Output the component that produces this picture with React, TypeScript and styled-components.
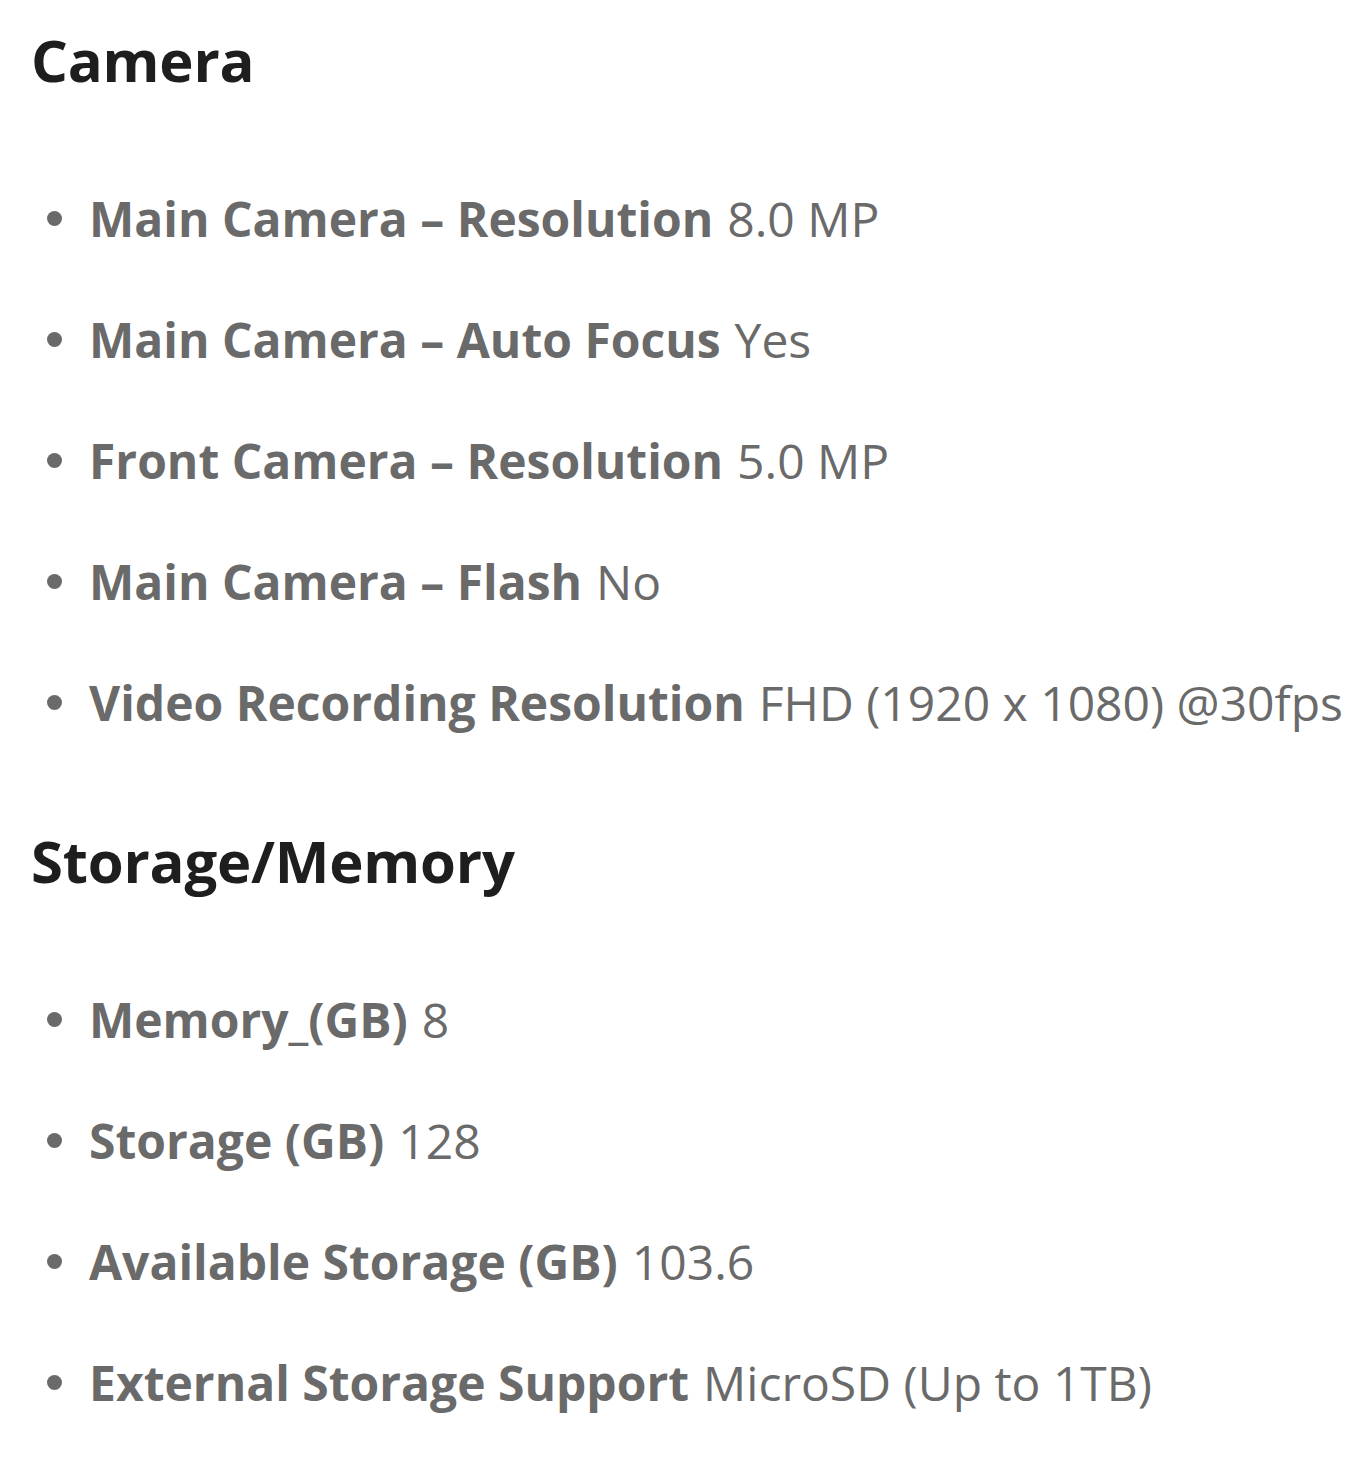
import React from "react";
import styled, { createGlobalStyle } from "styled-components";

const Global = createGlobalStyle`
  html, body { margin: 0; padding: 0; background: #ffffff; }
  body { font-family: "Open Sans", "Noto Sans", sans-serif; }
`;

const Page = styled.main`
  padding: 20px 0 0 31px;
  display: flex;
  flex-direction: column;
  gap: 58px;
`;

const Section = styled.section`
  display: flex;
  flex-direction: column;
  gap: 58px;
`;

const Heading = styled.h2`
  margin: 0;
  height: 80px;
  line-height: 80px;
  font-size: 58px;
  font-weight: 700;
  color: #1e1e1e;
  letter-spacing: -0.2px;
`;

const List = styled.ul`
  margin: 0;
  padding: 0;
  list-style: none;
  display: flex;
  flex-direction: column;
`;

const Item = styled.li`
  height: 121px;
  display: flex;
  align-items: center;
  font-size: 48px;
  color: #6a6a6a;
  white-space: nowrap;
  letter-spacing: 0;
`;

const Bullet = styled.span`
  width: 15px;
  height: 15px;
  border-radius: 50%;
  background: #6a6a6a;
  margin: 0 27px 0 16px;
  flex: none;
`;

const Label = styled.strong`
  font-weight: 700;
  margin-right: 14px;
`;

const Value = styled.span`
  font-weight: 400;
`;

type Spec = { label: string; value: string };

const sections: { title: string; specs: Spec[] }[] = [
  {
    title: "Camera",
    specs: [
      { label: "Main Camera – Resolution", value: "8.0 MP" },
      { label: "Main Camera – Auto Focus", value: "Yes" },
      { label: "Front Camera – Resolution", value: "5.0 MP" },
      { label: "Main Camera – Flash", value: "No" },
      { label: "Video Recording Resolution", value: "FHD (1920 x 1080) @30fps" },
    ],
  },
  {
    title: "Storage/Memory",
    specs: [
      { label: "Memory_(GB)", value: "8" },
      { label: "Storage (GB)", value: "128" },
      { label: "Available Storage (GB)", value: "103.6" },
      { label: "External Storage Support", value: "MicroSD (Up to 1TB)" },
    ],
  },
];

export default function App() {
  return (
    <>
      <Global />
      <Page>
        {sections.map((s) => (
          <Section key={s.title}>
            <Heading>{s.title}</Heading>
            <List>
              {s.specs.map((sp) => (
                <Item key={sp.label}>
                  <Bullet />
                  <Label>{sp.label}</Label>
                  <Value>{sp.value}</Value>
                </Item>
              ))}
            </List>
          </Section>
        ))}
      </Page>
    </>
  );
}
